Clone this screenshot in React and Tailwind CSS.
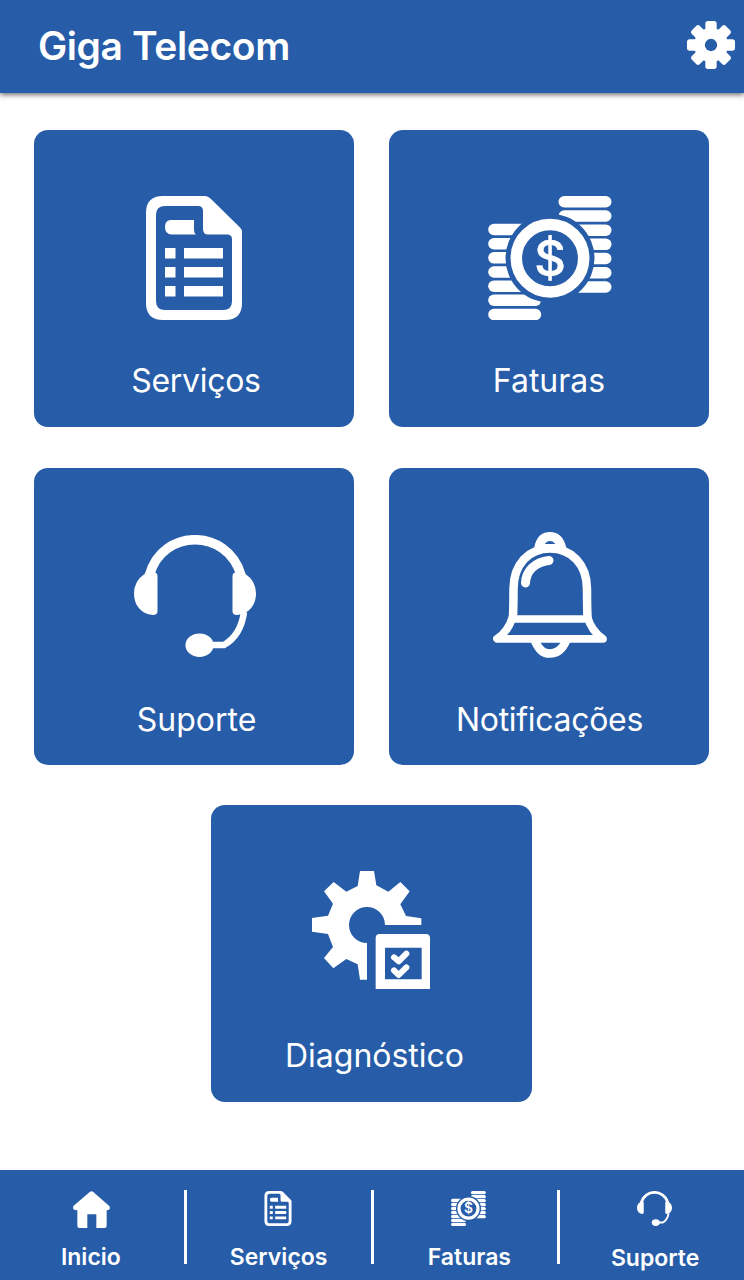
import React from "react";

function DocIcon({ className }) {
  return (
    <svg viewBox="146 196 96 124" className={className} fill="#fff">
      <path
        fillRule="evenodd"
        d="M163 196H205Q208 196 211 199L240 227.500Q242 229.500 242 232V303Q242 320 225 320H163Q146 320 146 303V213Q146 196 163 196ZM165 206Q156 206 156 215V301Q156 310 165 310H223Q232 310 232 301V239Q232 234.500 227 234.500H208Q203 234.500 203 229V211Q203 206 198 206Z"
      />
      <path d="M171 220H194V230Q194 233 196 234.500H171Q165 234 165 227T171 220Z" />
      <path d="M165 248h10.500v10.500h-10.500zM165 267h10.500v10.500h-10.500zM165 286h10.500v10.500h-10.500zM184 248h39v10.500h-39zM184 267h39v10.500h-39zM184 286h39v10.500h-39z" />
    </svg>
  );
}

function CoinsIcon({ className }) {
  const rows = [0, 1, 2, 3, 4, 5, 6];
  return (
    <svg viewBox="487.500 196 124 124" className={className} fill="#fff">
      {rows.map((i) => (
        <rect key={"r" + i} x="558" y={196 + i * 14.2} width="53" height="11.5" rx="5.75" />
      ))}
      {rows.map((i) => (
        <rect key={"l" + i} x="487.7" y={223.8 + i * 14.15} width="53" height="11.5" rx="5.75" />
      ))}
      <circle cx="549.5" cy="258.200" r="44.500" fill="#265ca8" />
      <circle cx="549.5" cy="258.200" r="33.700" fill="none" stroke="#fff" strokeWidth="11.500" />
      <text
        x="549.5"
        y="275.500"
        textAnchor="middle"
        stroke="#fff"
        strokeWidth="0.5"
        strokeLinejoin="round"
        className="font-[Inter,sans-serif] text-[49px] font-medium"
      >
        $
      </text>
    </svg>
  );
}

function HeadsetIcon({ className }) {
  return (
    <svg viewBox="134 535 122 122" className={className} fill="#fff">
      <path
        d="M149.500 575C156 551 176 539.700 195 539.700S234 551 241 575"
        fill="none"
        stroke="#fff"
        strokeWidth="9.500"
      />
      <path d="M144.500 574L147 571L154 573Q157.500 572 157.500 577V611Q157.500 615 153 615C140 614 134 604 134 593.500Q134 581 144.500 574Z" />
      <path d="M245.500 574L243 571L236 573Q232.500 572 232.500 577V611Q232.500 615 237 615C250 614 256 604 256 593.500Q256 581 245.500 574Z" />
      <path d="M244 612C242 627 236 638 224 645H210" fill="none" stroke="#fff" strokeWidth="6.500" />
      <ellipse cx="199.500" cy="645.200" rx="14" ry="11.800" />
    </svg>
  );
}

function BellIcon({ className }) {
  return (
    <svg
      viewBox="493 532 114 126"
      className={className}
      fill="none"
      stroke="#fff"
      strokeWidth="8.500"
      strokeLinecap="round"
      strokeLinejoin="round"
    >
      <path d="M538.500 549C540 540 544 536.500 550 536.500S560 540 562 549" strokeWidth="9" />
      <path d="M540 547.500H560" strokeWidth="7" />
      <path d="M513 617Q513.500 605 513.500 589C513.500 564 529 548.500 550 548.500S587 564 587 589Q587 605 587.500 617" />
      <path d="M513 619H587" strokeWidth="7.500" strokeLinecap="butt" />
      <path d="M513 616Q508 632 497 638.800H603Q592 632 587 616" strokeWidth="7.800" />
      <path d="M525.500 583C526 571 535 562 549 560.500" strokeWidth="9" />
      <path d="M535 641C539 650 543 653.500 550 653.500S562 650 566 641" strokeWidth="8.500" />
    </svg>
  );
}

function DiagnosticIcon({ className }) {
  return (
    <svg viewBox="126 33 354 354" className={className} fill="#fff">
      <path d="M270 33H312L319 76L355 95L391 66L419 94L391 133L408 168L454 175V195H345A54 54 0 1 0 291 249V359H270L263 313L229 297L190 325L162 294L189 261L174 222L126 215V174L174 167L189 131L162 94L191 66L229 95L263 78Z" />
      <path
        fillRule="evenodd"
        d="M329 222H468Q480 222 480 234V387H317V234Q317 222 329 222ZM345 263V358H455V263Z"
      />
      <path
        d="M372 292L386 304L409 281M372 331L386 345L409 322"
        fill="none"
        stroke="#fff"
        strokeWidth="18"
        strokeLinecap="round"
        strokeLinejoin="round"
      />
    </svg>
  );
}

function SettingsIcon({ className }) {
  return (
    <svg viewBox="-72 -72 144 144" className={className} fill="#fff">
      <rect x="-17" y="-72" width="34" height="144" rx="8" />
      <rect x="-17" y="-72" width="34" height="144" rx="8" transform="rotate(45)" />
      <rect x="-17" y="-72" width="34" height="144" rx="8" transform="rotate(90)" />
      <rect x="-17" y="-72" width="34" height="144" rx="8" transform="rotate(135)" />
      <circle r="51" />
      <circle r="18.500" fill="#265ca8" />
    </svg>
  );
}

function HomeIcon({ className }) {
  return (
    <svg viewBox="219 93 111 111" className={className} fill="#fff">
      <path d="M270 95Q274 92 279 95L327 137Q331 141 329 147Q327 151 320 151V198Q320 204 314 204H289V163H262V204H238Q232 204 232 198V151Q223 151 220 147Q218 141 221 137Z" />
    </svg>
  );
}

function Card({ label, labelClass, children }) {
  return (
    <button className="flex h-[297px] w-[320.500px] flex-col items-center rounded-[14px] bg-[#265ca8] text-white">
      <span className="flex h-[230px] items-start">{children}</span>
      <span className={`whitespace-nowrap text-[32px] leading-[42px] ${labelClass}`}>{label}</span>
    </button>
  );
}

function Tab({ label, labelClass, children }) {
  return (
    <button className="flex flex-1 flex-col items-center pt-[21px] text-white">
      <span className="flex h-[51px] items-start">{children}</span>
      <span className={`whitespace-nowrap text-[23px] font-semibold leading-[30px] ${labelClass}`}>
        {label}
      </span>
    </button>
  );
}

function Divider() {
  return <div className="mt-5 h-[73.500px] w-[3px] shrink-0 bg-white" />;
}

function App() {
  return (
    <div className="flex h-[1280px] w-[744px] flex-col bg-white font-[Inter,sans-serif]">
      <header className="flex h-[92.500px] items-center justify-between bg-[#265ca8] pb-[2px] pl-[38px] pr-[9px] shadow-[0_2px_5px_rgba(0,0,0,0.55)]">
        <h1 className="text-[39px] font-semibold leading-none tracking-[-0.4px] text-white">
          Giga Telecom
        </h1>
        <SettingsIcon className="h-12 w-12" />
      </header>

      <main className="flex flex-1 flex-col items-center pr-[1px] pt-[37.100px]">
        <div className="grid grid-cols-2 gap-x-[34.500px] gap-y-[41.500px]">
          <Card label="Serviços" labelClass="pl-1 tracking-[-0.3px]">
            <DocIcon className="mt-[66px] h-[124px] w-24" />
          </Card>
          <Card label="Faturas" labelClass="">
            <CoinsIcon className="ml-[1px] mt-[66px] h-[124px] w-[124px]" />
          </Card>
          <Card label="Suporte" labelClass="pl-[5px] pt-[1px]">
            <HeadsetIcon className="ml-[2px] mt-[67px] h-[122px] w-[122px]" />
          </Card>
          <Card label="Notificações" labelClass="pl-[1px] pt-[1px] tracking-[-0.3px]">
            <BellIcon className="ml-[2px] mt-[64px] h-[126px] w-[114px]" />
          </Card>
        </div>
        <div className="mt-10">
          <Card label="Diagnóstico" labelClass="pl-[6px]">
            <DiagnosticIcon className="mr-[1px] mt-[66px] h-[118px] w-[118px]" />
          </Card>
        </div>
      </main>

      <nav className="flex h-[110px] bg-[#265ca8]">
        <Tab label="Inicio" labelClass="pr-[2px]">
          <HomeIcon className="mr-[1px] h-[37px] w-[37px]" />
        </Tab>
        <Divider />
        <Tab label="Serviços" labelClass="">
          <DocIcon className="mr-[1px] h-[35px] w-7" />
        </Tab>
        <Divider />
        <Tab label="Faturas" labelClass="pl-[8px]">
          <CoinsIcon className="ml-[7px] h-[35px] w-[35px]" />
        </Tab>
        <Divider />
        <Tab label="Suporte" labelClass="pl-[6px] pt-[1px]">
          <HeadsetIcon className="ml-[4px] h-[35px] w-[35px]" />
        </Tab>
      </nav>
    </div>
  );
}

export default App;
